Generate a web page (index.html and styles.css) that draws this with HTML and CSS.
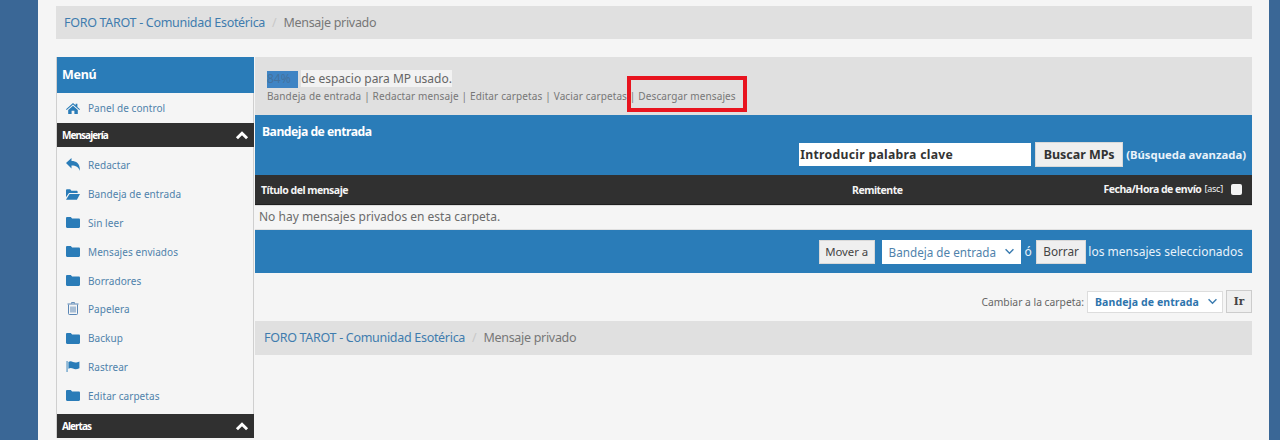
FILE: index.html
```html
<!DOCTYPE html>
<html lang="es">
<head>
<meta charset="utf-8">
<title>Mensaje privado</title>
<link rel="stylesheet" href="styles.css">
</head>
<body>
<svg class="defs" width="0" height="0" aria-hidden="true">
  <symbol id="folder" viewBox="0 0 14 11"><path d="M1.2 0h3.6l1.3 1.5h6.7c.7 0 1.2.5 1.2 1.2v7.1c0 .7-.5 1.2-1.2 1.2H1.2C.5 11 0 10.500 0 9.800V1.200C0 .5.500 0 1.200 0z"/></symbol>
</svg>
<div class="page">
  <nav class="crumbs crumbs-top"><a>FORO TAROT - Comunidad Esotérica</a><i>/</i><span>Mensaje privado</span></nav>
  <div class="layout">
    <aside class="side">
      <h2 class="side-title">Menú</h2>
      <a class="side-row first"><svg class="ic" viewBox="0 0 14 11"><path d="M7 0l2.600 2.300V.7h1.800v3.200L14 6.200l-.7.7L7 1.400.7 6.900 0 6.200zM2.200 7L7 2.800 11.800 7v4H8.400V7.800H5.600V11H2.200z"/></svg>Panel de control</a>
      <div class="side-head">Mensajería<svg class="chev" viewBox="0 0 12 8"><path d="M1.500 6.500L6 2l4.500 4.500"/></svg></div>
      <div class="side-list">
        <a class="side-row"><svg class="ic tall" viewBox="0 0 14 13"><path d="M0 5L5.500 0v3C10 3 14 5 14 13c-1.500-4-4-5.500-8.500-5.500V10.500z"/></svg>Redactar</a>
        <a class="side-row"><svg class="ic" viewBox="0 0 15 11"><path d="M0 1.200C0 .5.500 0 1.200 0h3.300l1.300 1.500h5.500c.7 0 1.200.5 1.200 1.200V4H3.200L0 8.500zM3.800 5H15l-3.300 6H0z"/></svg>Bandeja de entrada</a>
        <a class="side-row"><svg class="ic"><use href="#folder"/></svg>Sin leer</a>
        <a class="side-row"><svg class="ic"><use href="#folder"/></svg>Mensajes enviados</a>
        <a class="side-row"><svg class="ic"><use href="#folder"/></svg>Borradores</a>
        <a class="side-row"><svg class="ic trash" viewBox="0 0 12 13"><path d="M4.500 1.500V.6h3v.9M.5 2h11M1.500 2.500v9.200c0 .5.300.8.800.8h7.400c.5 0 .8-.3.800-.8V2.500M4 4.500v6M6 4.500v6M8 4.500v6"/></svg>Papelera</a>
        <a class="side-row"><svg class="ic"><use href="#folder"/></svg>Backup</a>
        <a class="side-row"><svg class="ic" viewBox="0 0 14 12"><path d="M0 0h1v12H0zM2 1c2-1.200 3.500-.6 5 0s3.500 1 7-.5V8c-3.500 1.500-5.500 1-7 .3S4 7.200 2 8.500z"/></svg>Rastrear</a>
        <a class="side-row"><svg class="ic"><use href="#folder"/></svg>Editar carpetas</a>
      </div>
      <div class="side-head">Alertas<svg class="chev" viewBox="0 0 12 8"><path d="M1.500 6.500L6 2l4.500 4.500"/></svg></div>
    </aside>
    <main class="main">
      <section class="quota">
        <p class="quota-text"><span class="quota-bar">84%</span> <span class="quota-label">de espacio para MP usado.</span></p>
        <p class="quota-links">Bandeja de entrada | Redactar mensaje | Editar carpetas | Vaciar carpetas | Descargar mensajes</p>
        <div class="mark"></div>
      </section>
      <section class="box-head">
        <h2>Bandeja de entrada</h2>
        <form class="search">
          <span class="search-input">Introducir palabra clave</span>
          <span class="btn btn-search">Buscar MPs</span>
          <a class="adv">(Búsqueda avanzada)</a>
        </form>
      </section>
      <div class="thead">
        <span class="th-title">Título del mensaje</span>
        <span class="th-from">Remitente</span>
        <span class="th-date">Fecha/Hora de envío <small>[asc]</small><b class="check"></b></span>
      </div>
      <div class="empty">No hay mensajes privados en esta carpeta.</div>
      <div class="actions">
        <span class="btn btn-move">Mover a</span>
        <span class="select">Bandeja de entrada<svg class="sel-chev" viewBox="0 0 12 8"><path d="M1.500 1.500L6 6l4.500-4.500"/></svg></span>
        <span class="or">ó</span>
        <span class="btn">Borrar</span>
        <span class="sel-text">los mensajes seleccionados</span>
      </div>
      <div class="jump">
        <span class="jump-label">Cambiar a la carpeta:</span>
        <span class="jump-select">Bandeja de entrada<svg class="sel-chev" viewBox="0 0 12 8"><path d="M1.500 1.500L6 6l4.500-4.500"/></svg></span>
        <span class="go">Ir</span>
      </div>
      <nav class="crumbs crumbs-bottom"><a>FORO TAROT - Comunidad Esotérica</a><i>/</i><span>Mensaje privado</span></nav>
    </main>
  </div>
</div>
</body>
</html>
```
FILE: styles.css
```css
* { box-sizing: border-box; }
html, body { height: 100%; }
body {
  margin: 0;
  height: 440px;
  overflow: hidden;
  background: #3a6796;
  font-family: "Noto Sans", "Open Sans", sans-serif;
  font-size: 13px;
  color: #6b6b6b;
}
.defs { position: absolute; }
h2, p { margin: 0; }
.page {
  width: 1231px;
  height: 440px;
  margin-left: 38px;
  padding: 6px 17px 0 18px;
  background: #f5f5f5;
}
.crumbs {
  display: flex;
  align-items: center;
  background: #e0e0e0;
  font-size: 12.500px;
  height: 33px;
  padding-bottom: 1px;
  letter-spacing: -.3px;
}
.crumbs a { color: #3f7cae; }
.crumbs i { margin: 0 7px; color: #c8c8c8; font-style: normal; }
.crumbs span { color: #777; }
.crumbs-top { padding-left: 8px; }
.crumbs-bottom { padding-left: 9px; height: 34px; margin-top: 8px; }
.layout { display: flex; margin-top: 18px; align-items: flex-start; }
.side {
  width: 198px;
  flex: none;
  border-right: 1px solid #cfcfcf;
  border-left: 1px solid #cfcfcf;
}
.side-title {
  height: 36px;
  margin: 0 -1px 0 0;
  padding-left: 5px;
  background: #2a7cb8;
  color: #fff;
  font-size: 12.500px;
  font-weight: 700;
  line-height: 35px;
  letter-spacing: -.3px;
}
.side-row {
  display: flex;
  align-items: center;
  height: 28.800px;
  padding-left: 9px;
  color: #4f82ab;
  font-size: 10px;
  letter-spacing: .06px;
}
.side-row.first { height: 30px; }
.ic { width: 14px; height: 11px; margin-right: 8px; fill: #2a7cb8; flex: none; }
.tall { height: 13px; margin-top: -2px; }
.trash { fill: none; stroke: #5a86b5; stroke-width: 1; height: 13px; margin-top: -2px; }
.side-head {
  display: flex;
  align-items: center;
  justify-content: space-between;
  height: 24px;
  margin-right: -1px;
  padding: 0 5px;
  background: #303030;
  color: #fff;
  font-size: 10px;
  font-weight: 700;
  letter-spacing: -.95px;
}
.chev { width: 14px; height: 9px; fill: none; stroke: #fff; stroke-width: 2.600; }
.side-list { padding: 4px 0 4px; }
.main { flex: 1; min-width: 0; margin-left: 1px; }
.quota { position: relative; height: 58px; padding: 14px 12px 0; background: #e0e0e0; }
.quota-text { font-size: 12px; line-height: 16px; color: #666; }
.quota-bar { display: inline-block; width: 31px; height: 17px; background: #3f84c4; color: #43729f; }
.quota-label { background: #f2f2f2; margin-left: 0; }
.quota-links { margin-top: 1px; font-size: 10px; letter-spacing: .11px; word-spacing: .15px; color: #777; white-space: nowrap; }
.mark {
  position: absolute;
  left: 372px;
  top: 19px;
  width: 120px;
  height: 36px;
  border: 4px solid #e8141f;
}
.box-head { height: 60px; padding: 8px 6px 0 7px; background: #2a7cb8; color: #fff; }
.box-head h2 { font-size: 12.200px; font-weight: 700; line-height: 18px; letter-spacing: -.5px; }
.search { display: flex; justify-content: flex-end; align-items: center; margin-top: 1px; }
.search-input {
  width: 232px;
  height: 23px;
  padding-left: 1px;
  background: #fff;
  color: #333;
  font-size: 12.200px;
  font-weight: 700;
  line-height: 23px;
  letter-spacing: .3px;
}
.btn {
  display: inline-block;
  height: 25px;
  padding: 0 6.500px;
  background: #efefef;
  border: 1px solid #d9d9d9;
  color: #444;
  font-size: 11.800px;
  line-height: 23px;
  white-space: nowrap;
  letter-spacing: -.05px;
}
.btn-search { margin-left: 4px; width: 88px; padding: 0; text-align: center; font-size: 12.500px; font-weight: 700; color: #333; }
.btn-move { padding: 0 5.500px; font-size: 11.400px; }
.adv { margin-left: 3px; color: #e8f2fa; font-size: 11.300px; font-weight: 700; }
.thead {
  display: flex;
  align-items: center;
  height: 30px;
  padding: 0 10px 0 6px;
  background: #303030;
  border-bottom: 1px solid #1f1f1f;
  color: #f4f4f4;
  font-size: 10.500px;
  font-weight: 700;
  letter-spacing: -.5px;
  white-space: nowrap;
}
.th-title { width: 591px; }
.th-from { width: 200px; }
.th-date { flex: 1; display: flex; justify-content: flex-end; align-items: center; margin-top: -2px; }
.th-date small { font-size: 9px; font-weight: 400; margin-left: 3px; letter-spacing: -.2px; }
.check { width: 11px; height: 11px; margin: 2px 0 0 8px; background: #f4f4f4; border-radius: 2px; }
.empty { height: 25px; padding-left: 4px; font-size: 12px; line-height: 22px; border-bottom: 1px solid #e0e0e0; border-top: 1px solid #dcdcdc; }
.actions {
  display: flex;
  align-items: center;
  justify-content: flex-end;
  height: 43px;
  padding-right: 9px;
  background: #2a7cb8;
  color: #e8f2fa;
  font-size: 12px;
}
.actions .btn { height: 24px; line-height: 21px; }
.select {
  display: flex;
  align-items: center;
  justify-content: space-between;
  width: 139px;
  height: 24px;
  margin: 0 4px 0 7px;
  padding: 0 6px 0 7px;
  background: #fff;
  color: #4f82ab;
  font-size: 11.700px;
}
.sel-chev { width: 11px; height: 7px; fill: none; stroke: #3a7bb0; stroke-width: 1.600; }
.or { margin-right: 4px; }
.sel-text { margin-left: 2px; }
.jump { display: flex; justify-content: flex-end; align-items: center; height: 40px; padding-top: 17px; }
.jump-label { font-size: 10.300px; color: #666; }
.jump-select {
  display: flex;
  align-items: center;
  justify-content: space-between;
  width: 136px;
  height: 22px;
  margin: 0 3px 0 3px;
  padding: 0 4px 0 7px;
  background: #fff;
  border: 1px solid #ddd;
  color: #2d74ad;
  font-size: 10.500px;
  font-weight: 700;
  letter-spacing: .1px;
}
.go {
  width: 26px;
  height: 23px;
  background: #efefef;
  border: 1px solid #ccc;
  color: #444;
  font-family: "DejaVu Serif", serif;
  font-size: 10.500px;
  font-weight: 700;
  line-height: 21px;
  text-align: center;
}
```
